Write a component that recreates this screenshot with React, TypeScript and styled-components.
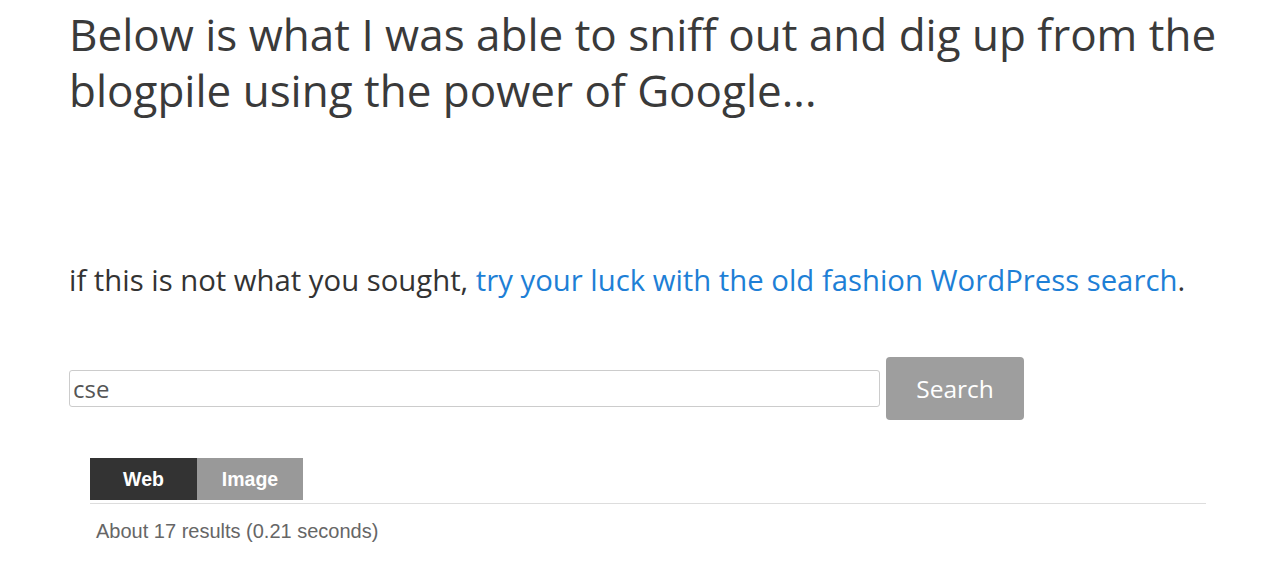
import React from "react";
import styled, { createGlobalStyle } from "styled-components";

const Global = createGlobalStyle`
  html, body { margin: 0; padding: 0; background: #fff; }
  body { font-family: "Open Sans", sans-serif; color: #333; }
`;

const Page = styled.div`
  padding: 6px 0 0 69px;
  width: 1180px;
`;

const Heading = styled.h1`
  margin: 0;
  font-size: 44px;
  font-weight: 400;
  line-height: 56px;
  color: #3a3a3a;
`;

const Note = styled.p`
  margin: 142px 0 0;
  font-size: 29.3px;
  line-height: 40px;
  color: #333;
`;

const Link = styled.a`
  color: #1e7fd6;
  text-decoration: none;
`;

const SearchRow = styled.form`
  display: flex;
  align-items: center;
  gap: 6px;
  margin-top: 57px;
`;

const Input = styled.input`
  box-sizing: border-box;
  width: 811px;
  height: 37px;
  border: 1px solid #ccc;
  border-radius: 3px;
  padding: 0 8px 0 3px;
  font-family: "Open Sans", sans-serif;
  font-size: 24px;
  color: #555;
  outline: none;
`;

const Button = styled.button`
  box-sizing: border-box;
  width: 138px;
  height: 63px;
  border: none;
  border-radius: 4px;
  background: #9e9e9e;
  color: #fff;
  font-family: "Open Sans", sans-serif;
  font-size: 24.5px;
`;

const Results = styled.div`
  margin: 38px 0 0 21px;
  width: 1116px;
`;

const Tabs = styled.div`
  display: flex;
  border-bottom: 1px solid #ddd;
  padding-bottom: 3px;
`;

const Tab = styled.div<{ $active?: boolean }>`
  width: ${(p) => (p.$active ? 107 : 106)}px;
  height: 42px;
  display: flex;
  align-items: center;
  justify-content: center;
  background: ${(p) => (p.$active ? "#333" : "#999")};
  color: #fff;
  font-family: "Liberation Sans", Arial, sans-serif;
  font-weight: 700;
  font-size: 19.5px;
`;

const Info = styled.div`
  margin: 16px 0 0 6px;
  font-family: "Liberation Sans", Arial, sans-serif;
  font-size: 20px;
  color: #666;
`;

export default function App() {
  return (
    <>
      <Global />
      <Page>
        <Heading>
          Below is what I was able to sniff out and dig up from the blogpile using the power of Google...
        </Heading>
        <Note>
          if this is not what you sought, <Link href="#">try your luck with the old fashion WordPress search</Link>.
        </Note>
        <SearchRow onSubmit={(e) => e.preventDefault()}>
          <Input defaultValue="cse" />
          <Button type="submit">Search</Button>
        </SearchRow>
        <Results>
          <Tabs>
            <Tab $active>Web</Tab>
            <Tab>Image</Tab>
          </Tabs>
          <Info>About 17 results (0.21 seconds)</Info>
        </Results>
      </Page>
    </>
  );
}
